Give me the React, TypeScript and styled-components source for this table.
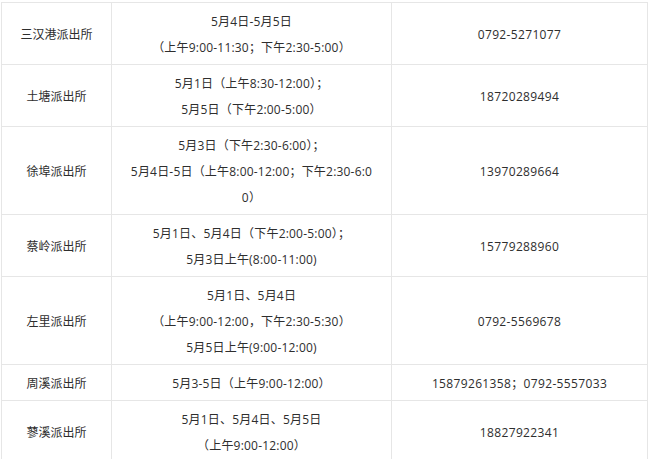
import React from "react";
import styled, { createGlobalStyle } from "styled-components";

const Global = createGlobalStyle`
  html, body {
    margin: 0;
    padding: 0;
    background: #ffffff;
    overflow: hidden;
  }
  body {
    font-family: "Open Sans", "Noto Sans CJK SC", sans-serif;
  }
`;

const Page = styled.div`
  padding: 2px 0 0 1px;
`;

const Table = styled.table`
  border-collapse: collapse;
  table-layout: fixed;
  width: 646px;
  color: #2e2e2e;
  font-size: 12px;
`;

const Cell = styled.td<{ $spacing?: number }>`
  border: 1px solid #e6e6e6;
  padding: 6px 4px 3px;
  text-align: center;
  vertical-align: middle;
  line-height: 26px;
  letter-spacing: ${(p) => p.$spacing ?? 0}px;
`;

const Line = styled.div`
  white-space: nowrap;
`;

type Row = { name: string; times: string[]; phone: string };

const rows: Row[] = [
  { name: "三汉港派出所", times: ["5月4日-5月5日", "（上午9:00-11:30；下午2:30-5:00）"], phone: "0792-5271077" },
  { name: "土塘派出所", times: ["5月1日（上午8:30-12:00）；", "5月5日（下午2:00-5:00）"], phone: "18720289494" },
  {
    name: "徐埠派出所",
    times: ["5月3日（下午2:30-6:00）；", "5月4日-5日（上午8:00-12:00；下午2:30-6:0", "0）"],
    phone: "13970289664",
  },
  { name: "蔡岭派出所", times: ["5月1日、5月4日（下午2:00-5:00）；", "5月3日上午(8:00-11:00)"], phone: "15779288960" },
  {
    name: "左里派出所",
    times: ["5月1日、5月4日", "（上午9:00-12:00，下午2:30-5:30）", "5月5日上午(9:00-12:00)"],
    phone: "0792-5569678",
  },
  { name: "周溪派出所", times: ["5月3-5日（上午9:00-12:00）"], phone: "15879261358；0792-5557033" },
  { name: "蓼溪派出所", times: ["5月1日、5月4日、5月5日", "（上午9:00-12:00）"], phone: "18827922341" },
];

export default function App() {
  return (
    <>
      <Global />
      <Page>
        <Table>
          <colgroup>
            <col style={{ width: 110 }} />
            <col style={{ width: 280 }} />
            <col style={{ width: 256 }} />
          </colgroup>
          <tbody>
            {rows.map((r) => (
              <tr key={r.name}>
                <Cell>{r.name}</Cell>
                <Cell $spacing={0.2}>
                  {r.times.map((t, i) => (
                    <Line key={i}>{t}</Line>
                  ))}
                </Cell>
                <Cell $spacing={0.35}>{r.phone}</Cell>
              </tr>
            ))}
          </tbody>
        </Table>
      </Page>
    </>
  );
}
